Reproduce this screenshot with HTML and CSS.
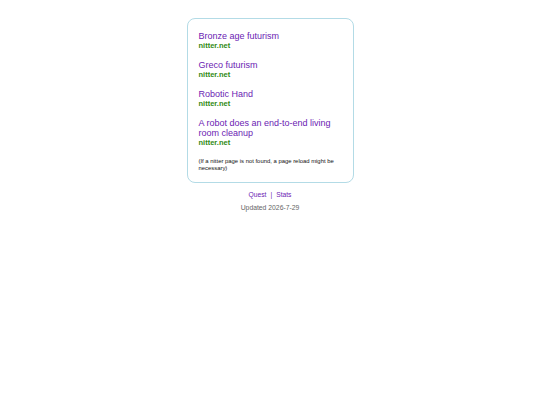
FILE: index.html
```html
<!DOCTYPE html>
<html>
<head>
<meta charset="utf-8">
<link rel="stylesheet" href="styles.css">
</head>
<body>
<div class="page">
  <div class="card">
    <div class="item">
      <a class="title" href="#">Bronze age futurism</a>
      <div class="src">nitter.net</div>
    </div>
    <div class="item">
      <a class="title" href="#">Greco futurism</a>
      <div class="src">nitter.net</div>
    </div>
    <div class="item">
      <a class="title" href="#">Robotic Hand</a>
      <div class="src">nitter.net</div>
    </div>
    <div class="item">
      <a class="title" href="#">A robot does an end-to-end living room cleanup</a>
      <div class="src">nitter.net</div>
    </div>
    <p class="note">(If a nitter page is not found, a page reload might be necessary)</p>
  </div>
  <div class="links"><a href="#">Quest</a><span class="sep">|</span><a href="#">Stats</a></div>
  <div class="updated">Updated 2026-7-29</div>
</div>
</body>
</html>
```
FILE: styles.css
```css
html, body {
  margin: 0;
  padding: 0;
  background: #fff;
  font-family: "Liberation Sans", Arial, sans-serif;
}
.page {
  display: flex;
  flex-direction: column;
  align-items: center;
  padding-top: 18px;
}
.card {
  width: 143px;
  border: 1px solid #b3dbe6;
  border-radius: 8px;
  padding: 12px 11px 10px 11px;
  display: flex;
  flex-direction: column;
  gap: 10px;
}
.item {
  display: flex;
  flex-direction: column;
}
.title {
  color: #6b22b3;
  text-decoration: none;
  font-size: 9px;
  line-height: 10px;
}
.src {
  color: #2f8a12;
  font-weight: bold;
  font-size: 7.5px;
  line-height: 9px;
}
.note {
  margin: 1px 0 0 0;
  font-size: 5.9px;
  line-height: 7px;
  color: #111;
}
.links {
  margin-top: 7px;
  font-size: 6.7px;
  line-height: 9px;
}
.links a {
  color: #6b22b3;
  text-decoration: none;
}
.sep {
  color: #6b22b3;
  margin: 0 4px;
}
.updated {
  margin-top: 4px;
  font-size: 6.8px;
  line-height: 9px;
  color: #666;
}
```
